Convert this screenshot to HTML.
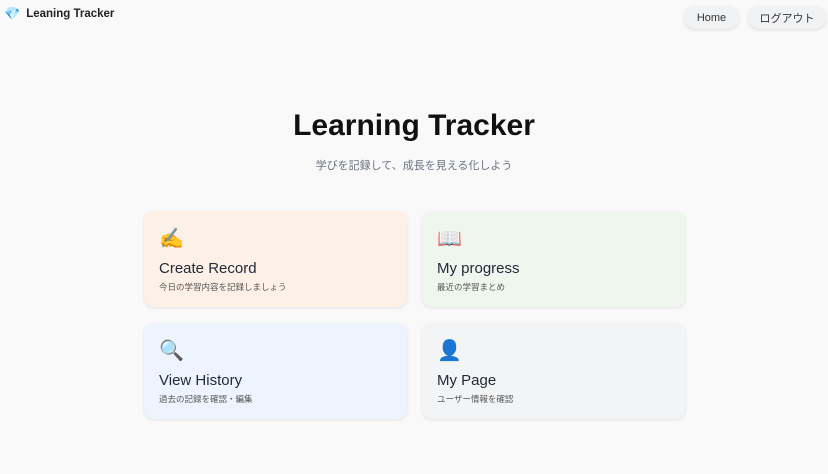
<!DOCTYPE html>
<html><head><meta charset="utf-8"><style>
body{margin:0;width:828px;height:474px;background:#f9f9f9;font-family:"Liberation Sans","Noto Sans CJK JP",sans-serif;position:relative;overflow:hidden}
.logo{position:absolute;left:4px;top:6px;display:flex;align-items:center;font-size:11.5px;font-weight:bold;color:#222}
.btn{position:absolute;top:6px;height:23px;border-radius:12px;background:#f1f2f4;box-shadow:0 1px 3px rgba(0,0,0,.12);font-size:11px;color:#333;display:flex;align-items:center;justify-content:center}
h1{position:absolute;left:0;right:0;top:109px;margin:0;text-align:center;font-size:30px;font-weight:bold;color:#111}
.sub{position:absolute;left:0;right:0;top:157px;text-align:center;font-size:11px;color:#6b7280}
.card{position:absolute;width:263px;height:96px;border-radius:10px;box-shadow:0 1px 3px rgba(0,0,0,.1)}
.ic{position:absolute;left:15px;top:16px;font-size:20px;line-height:24px}
.t{position:absolute;left:15px;top:49px;font-size:15px;color:#1f2937}
.d{position:absolute;left:15px;top:70px;font-size:8.5px;color:#555}
</style></head><body>
<div class="logo"><span style="font-size:13px;color:#3b82f6;margin-right:6px">💎</span>Leaning Tracker</div>
<div class="btn" style="left:684px;width:55px">Home</div>
<div class="btn" style="left:748px;width:78px">ログアウト</div>
<h1>Learning Tracker</h1>
<div class="sub">学びを記録して、成長を見える化しよう</div>
<div class="card" style="left:144px;top:211px;background:#fdf1e7"><div class="ic">✍️</div><div class="t">Create Record</div><div class="d">今日の学習内容を記録しましょう</div></div>
<div class="card" style="left:422px;top:211px;background:#eff6ee"><div class="ic">📖</div><div class="t">My progress</div><div class="d">最近の学習まとめ</div></div>
<div class="card" style="left:144px;top:323px;background:#edf4fd"><div class="ic">🔍</div><div class="t">View History</div><div class="d">過去の記録を確認・編集</div></div>
<div class="card" style="left:422px;top:323px;background:#f2f4f6"><div class="ic">👤</div><div class="t">My Page</div><div class="d">ユーザー情報を確認</div></div>
</body></html>
